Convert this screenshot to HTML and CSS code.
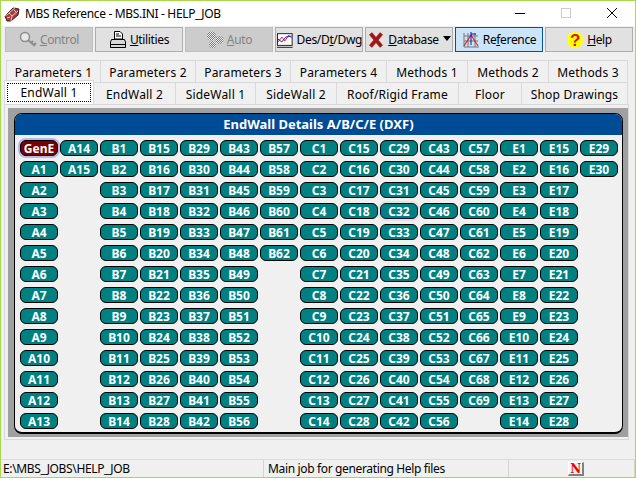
FILE: index.html
```html
<!DOCTYPE html>
<html lang="en">
<head>
  <meta charset="UTF-8" />
  <title>MBS Reference - MBS.INI - HELP_JOB</title>
  <link rel="stylesheet" href="styles.css">
</head>
<body>
<div class="window">

  <div class="titlebar">
    <svg class="app-icon" width="16" height="16" viewBox="0 0 16 16">
      <path d="M1 10 L9 2 L15 3 L14 9 L7 15 L3 15 Z" fill="#a83c3c" stroke="#3a1a1a"/>
      <path d="M1 10 L5 7 L8 10 L7 15 M5 7 L12 1 M8 10 L14 5 M3 12 L6 11 M10 4 L12 6" fill="none" stroke="#e8c8c8"/>
    </svg>
    <span class="title-text">MBS Reference - MBS.INI - HELP_JOB</span>
    <div class="winctl">
      <svg width="46" height="26" viewBox="0 0 46 26"><path d="M18 12.5 H28" stroke="#000"/></svg>
      <svg width="46" height="26" viewBox="0 0 46 26"><rect x="18.5" y="7.5" width="9" height="9" fill="none" stroke="#ccc"/></svg>
      <svg width="46" height="26" viewBox="0 0 46 26"><path d="M18 7 L28 17 M28 7 L18 17" stroke="#000" fill="none"/></svg>
    </div>
  </div>

  <div class="toolbar">
    <button class="tool disabled">
      <svg width="18" height="18" viewBox="0 0 18 18"><circle cx="6" cy="6" r="4.5" fill="#e8e8e8" stroke="#8c8c8c" stroke-width="1.5"/><path d="M9 9 L16 15 M12 12 L14 10 M15 14 L17 12" stroke="#8c8c8c" stroke-width="2" fill="none"/></svg>
      <span><u>C</u>ontrol</span>
    </button>
    <button class="tool">
      <svg width="18" height="18" viewBox="0 0 18 18"><path d="M5.5 0.5 H11 L13.5 3 V8 H5.5 Z" fill="#fff" stroke="#000"/><path d="M7 3 H10 M7 5 H12" stroke="#000"/><path d="M2.5 8.5 H15.5 L16.5 11 V16.5 H1.5 V11 Z" fill="#d8d8d8" stroke="#000"/><path d="M2 13.5 H16" stroke="#000"/></svg>
      <span><u>U</u>tilities</span>
    </button>
    <button class="tool disabled">
      <svg width="18" height="18" viewBox="0 0 18 18">
        <defs><pattern id="dither" width="2" height="2" patternUnits="userSpaceOnUse"><rect width="2" height="2" fill="#f0f0f0"/><rect width="1" height="1" fill="#777"/><rect x="1" y="1" width="1" height="1" fill="#777"/></pattern></defs>
        <circle cx="5.5" cy="5" r="4.5" fill="url(#dither)"/><circle cx="13.5" cy="9" r="4" fill="url(#dither)"/><circle cx="6.5" cy="13.5" r="3.5" fill="url(#dither)"/>
      </svg>
      <span><u>A</u>uto</span>
    </button>
    <button class="tool">
      <svg width="18" height="18" viewBox="0 0 18 18"><rect x="1.5" y="2.5" width="15" height="12" fill="#fff" stroke="#222"/><path d="M2 11 L6 6 L9 10 L13 4 L16 7" stroke="#e02020" fill="none"/><path d="M2 8 L6 11 L10 6 L16 5" stroke="#2020d0" fill="none"/><path d="M1 16.5 H17" stroke="#222"/></svg>
      <span>Des/D<u>t</u>/Dwg</span>
    </button>
    <button class="tool">
      <svg width="18" height="18" viewBox="0 0 18 18"><path d="M3.5 2.5 L14.5 15.5 M14.5 2.5 L3.5 15.5" stroke="#a01818" stroke-width="3.8" fill="none"/></svg>
      <span><u>D</u>atabase</span>
      <span class="caret"></span>
    </button>
    <button class="tool active">
      <svg width="18" height="18" viewBox="0 0 18 18"><path d="M2 2 V16 H17 M2 5 H16 M2 10 H16 M6 2 V16 M13 2 V16" stroke="#777" fill="none"/><path d="M2 15 L9 4 L16 15" stroke="#e02020" fill="none" stroke-width="1.2"/><path d="M9 1 V14 M9 3 H14" stroke="#1010c0"/></svg>
      <span>Re<u>f</u>erence</span>
    </button>
    <button class="tool">
      <svg width="18" height="18" viewBox="0 0 18 18">
        <defs><pattern id="yellow" width="2" height="2" patternUnits="userSpaceOnUse"><rect width="2" height="2" fill="#ffff00"/><rect width="1" height="1" fill="#fff8c0"/></pattern></defs>
        <circle cx="9" cy="9" r="8" fill="url(#yellow)"/><text x="9" y="14.5" text-anchor="middle" class="help-mark">?</text>
      </svg>
      <span><u>H</u>elp</span>
    </button>
  </div>

  <div class="tabs">
    <div class="tab-row">
      <span class="tab t95">Parameters 1</span>
      <span class="tab t95">Parameters 2</span>
      <span class="tab t95">Parameters 3</span>
      <span class="tab t96">Parameters 4</span>
      <span class="tab t81">Methods 1</span>
      <span class="tab t81">Methods 2</span>
      <span class="tab t79">Methods 3</span>
    </div>
    <div class="tab-row lower">
      <span class="tab current"><span class="focus">EndWall 1</span></span>
      <span class="tab t82">EndWall 2</span>
      <span class="tab t80">SideWall 1</span>
      <span class="tab t81">SideWall 2</span>
      <span class="tab t122">Roof/Rigid Frame</span>
      <span class="tab t63">Floor</span>
      <span class="tab t106">Shop Drawings</span>
    </div>
  </div>

  <div class="page">
    <div class="frame">
      <div class="panel">
        <div class="panel-title">EndWall Details A/B/C/E (DXF)</div>
        <div class="grid">
          <div class="col">
            <button class="pill gen">GenE</button><button class="pill">A1</button><button class="pill">A2</button><button class="pill">A3</button><button class="pill">A4</button><button class="pill">A5</button><button class="pill">A6</button><button class="pill">A7</button><button class="pill">A8</button><button class="pill">A9</button><button class="pill">A10</button><button class="pill">A11</button><button class="pill">A12</button><button class="pill">A13</button>
          </div>
          <div class="col">
            <button class="pill">A14</button><button class="pill">A15</button>
          </div>
          <div class="col">
            <button class="pill">B1</button><button class="pill">B2</button><button class="pill">B3</button><button class="pill">B4</button><button class="pill">B5</button><button class="pill">B6</button><button class="pill">B7</button><button class="pill">B8</button><button class="pill">B9</button><button class="pill">B10</button><button class="pill">B11</button><button class="pill">B12</button><button class="pill">B13</button><button class="pill">B14</button>
          </div>
          <div class="col">
            <button class="pill">B15</button><button class="pill">B16</button><button class="pill">B17</button><button class="pill">B18</button><button class="pill">B19</button><button class="pill">B20</button><button class="pill">B21</button><button class="pill">B22</button><button class="pill">B23</button><button class="pill">B24</button><button class="pill">B25</button><button class="pill">B26</button><button class="pill">B27</button><button class="pill">B28</button>
          </div>
          <div class="col">
            <button class="pill">B29</button><button class="pill">B30</button><button class="pill">B31</button><button class="pill">B32</button><button class="pill">B33</button><button class="pill">B34</button><button class="pill">B35</button><button class="pill">B36</button><button class="pill">B37</button><button class="pill">B38</button><button class="pill">B39</button><button class="pill">B40</button><button class="pill">B41</button><button class="pill">B42</button>
          </div>
          <div class="col">
            <button class="pill">B43</button><button class="pill">B44</button><button class="pill">B45</button><button class="pill">B46</button><button class="pill">B47</button><button class="pill">B48</button><button class="pill">B49</button><button class="pill">B50</button><button class="pill">B51</button><button class="pill">B52</button><button class="pill">B53</button><button class="pill">B54</button><button class="pill">B55</button><button class="pill">B56</button>
          </div>
          <div class="col">
            <button class="pill">B57</button><button class="pill">B58</button><button class="pill">B59</button><button class="pill">B60</button><button class="pill">B61</button><button class="pill">B62</button>
          </div>
          <div class="col">
            <button class="pill">C1</button><button class="pill">C2</button><button class="pill">C3</button><button class="pill">C4</button><button class="pill">C5</button><button class="pill">C6</button><button class="pill">C7</button><button class="pill">C8</button><button class="pill">C9</button><button class="pill">C10</button><button class="pill">C11</button><button class="pill">C12</button><button class="pill">C13</button><button class="pill">C14</button>
          </div>
          <div class="col">
            <button class="pill">C15</button><button class="pill">C16</button><button class="pill">C17</button><button class="pill">C18</button><button class="pill">C19</button><button class="pill">C20</button><button class="pill">C21</button><button class="pill">C22</button><button class="pill">C23</button><button class="pill">C24</button><button class="pill">C25</button><button class="pill">C26</button><button class="pill">C27</button><button class="pill">C28</button>
          </div>
          <div class="col">
            <button class="pill">C29</button><button class="pill">C30</button><button class="pill">C31</button><button class="pill hovered">C32</button><button class="pill">C33</button><button class="pill">C34</button><button class="pill">C35</button><button class="pill">C36</button><button class="pill">C37</button><button class="pill">C38</button><button class="pill">C39</button><button class="pill">C40</button><button class="pill">C41</button><button class="pill">C42</button>
          </div>
          <div class="col">
            <button class="pill">C43</button><button class="pill">C44</button><button class="pill">C45</button><button class="pill">C46</button><button class="pill">C47</button><button class="pill">C48</button><button class="pill">C49</button><button class="pill">C50</button><button class="pill">C51</button><button class="pill">C52</button><button class="pill">C53</button><button class="pill">C54</button><button class="pill">C55</button><button class="pill">C56</button>
          </div>
          <div class="col">
            <button class="pill">C57</button><button class="pill">C58</button><button class="pill">C59</button><button class="pill">C60</button><button class="pill">C61</button><button class="pill">C62</button><button class="pill">C63</button><button class="pill">C64</button><button class="pill">C65</button><button class="pill">C66</button><button class="pill">C67</button><button class="pill">C68</button><button class="pill">C69</button>
          </div>
          <div class="col">
            <button class="pill">E1</button><button class="pill">E2</button><button class="pill">E3</button><button class="pill">E4</button><button class="pill">E5</button><button class="pill">E6</button><button class="pill">E7</button><button class="pill">E8</button><button class="pill">E9</button><button class="pill">E10</button><button class="pill">E11</button><button class="pill">E12</button><button class="pill">E13</button><button class="pill">E14</button>
          </div>
          <div class="col">
            <button class="pill">E15</button><button class="pill">E16</button><button class="pill">E17</button><button class="pill">E18</button><button class="pill">E19</button><button class="pill">E20</button><button class="pill">E21</button><button class="pill">E22</button><button class="pill">E23</button><button class="pill">E24</button><button class="pill">E25</button><button class="pill">E26</button><button class="pill">E27</button><button class="pill">E28</button>
          </div>
          <div class="col">
            <button class="pill">E29</button><button class="pill">E30</button>
          </div>
        </div>
      </div>
    </div>
  </div>

  <div class="statusbar">
    <div class="cell path">E:\MBS_JOBS\HELP_JOB</div>
    <div class="cell desc">Main job for generating Help files</div>
    <div class="cell flag"><span class="n-badge">N</span></div>
  </div>

</div>
</body>
</html>
```

FILE: styles.css
```css
* {
  box-sizing: border-box;
}

html, body {
  margin: 0;
  height: 100%;
}

body {
  overflow: hidden;
  font-family: "Noto Sans", "Open Sans", sans-serif;
  font-size: 12px;
  color: #000;
  background-color: #f0f0f0;
}

.window {
  display: flex;
  flex-direction: column;
  width: 636px;
  height: 478px;
  border: 1px solid #a8d84e;
}

/* title bar */
.titlebar {
  display: flex;
  align-items: center;
  height: 25px;
  background-color: #fff;
  padding-left: 3px;
}

.app-icon {
  margin-right: 5px;
}

.title-text {
  flex: 1;
  font-size: 12px;
  letter-spacing: -0.33px;
}

.winctl {
  display: flex;
  align-self: flex-start;
}

/* toolbar */
.toolbar {
  display: flex;
  gap: 2px;
  padding: 1px 0 0 4px;
  background-color: #f0f0f0;
}

.tool {
  display: flex;
  align-items: center;
  justify-content: center;
  gap: 3px;
  width: 88px;
  height: 25px;
  padding: 0;
  font-family: inherit;
  font-size: 12px;
  letter-spacing: -0.35px;
  color: #000;
  background-color: #e1e1e1;
  border: 1px solid #adadad;
}

.tool.disabled {
  background-color: #cccccc;
  color: #838383;
  border-color: #bfbfbf;
}

.tool.active {
  background-color: #cce4f7;
  border-color: #005499;
}

.help-mark {
  font-family: "Liberation Sans", sans-serif;
  font-size: 17px;
  font-weight: bold;
  fill: #e01010;
}

.caret {
  width: 0;
  height: 0;
  margin: 0 0 2px 1px;
  border-left: 4px solid transparent;
  border-right: 4px solid transparent;
  border-top: 5px solid #000;
}

/* tabs */
.tabs {
  padding: 8px 0 0 3px;
}

.tab-row {
  display: flex;
  height: 22px;
  padding-left: 2px;
}

.tab-row.lower {
  padding-left: 0;
}

.tab {
  display: flex;
  align-items: center;
  justify-content: center;
  padding-top: 1px;
  font-size: 12px;
  letter-spacing: 0.2px;
  background-color: #f0f0f0;
  border: 1px solid #d9d9d9;
  border-left-width: 0;
  border-bottom-width: 0;
}

.tab-row .tab:first-child {
  border-left-width: 1px;
}

.t63 { width: 63px; }
.t79 { width: 79px; }
.t80 { width: 80px; }
.t81 { width: 81px; }
.t82 { width: 82px; }
.t95 { width: 95px; }
.t96 { width: 96px; }
.t106 { width: 106px; }
.t122 { width: 122px; }

.tab.current {
  width: 90px;
  height: 24px;
  margin-top: -2px;
  padding: 2px;
  background-color: #fff;
  position: relative;
}

.focus {
  display: flex;
  align-items: center;
  justify-content: center;
  width: 100%;
  height: 100%;
  border: 1px dotted #000;
}

/* tab page */
.page {
  height: 336px;
  margin: 0 6px 0 3px;
  padding: 3px 0 2px 3px;
  border: 1px solid #d9d9d9;
  background-color: #f0f0f0;
}

.frame {
  height: 100%;
  padding: 5px 5px 3px 6px;
  background-color: #a0a0a0;
}

.panel {
  height: 100%;
  background-color: #f0f0f0;
  border: 1px solid #000;
  border-bottom-width: 2px;
  border-radius: 8px;
  overflow: hidden;
}

.panel-title {
  height: 21px;
  line-height: 21px;
  text-align: center;
  font-size: 13px;
  font-weight: bold;
  color: #fff;
  background-color: #004b96;
}

.grid {
  display: flex;
  gap: 2px;
  padding: 5px 0 0 5px;
}

.col {
  display: flex;
  flex-direction: column;
  gap: 5px;
  width: 38px;
}

.pill {
  width: 38px;
  height: 16px;
  padding: 1px 0 0;
  font-family: "Noto Sans", sans-serif;
  font-size: 12px;
  font-weight: bold;
  line-height: 14px;
  color: #fff;
  background-color: #008080;
  border: 1px solid #000;
  border-radius: 6px;
}

.pill.gen {
  background-color: #7a0000;
  box-shadow: 0 0 0 2px #b8b8ec;
}

.pill.hovered {
  box-shadow: 0 0 0 2px #e6e2dc;
  border-color: #101040;
}

/* status bar */
.statusbar {
  display: flex;
  height: 18px;
  margin-top: auto;
  border-top: 1px solid #dcdcdc;
}

.cell {
  display: flex;
  align-items: center;
  font-size: 12px;
  letter-spacing: -0.35px;
  padding-left: 2px;
  border-right: 1px solid #d4d4d4;
}

.path { width: 263px; }

.desc {
  width: 245px;
  padding-left: 4px;
}

.flag {
  flex: 1;
  padding-left: 59px;
}

.n-badge {
  width: 16px;
  height: 14px;
  line-height: 12px;
  text-align: center;
  font-family: "DejaVu Serif", serif;
  font-size: 12px;
  font-weight: bold;
  color: #f00000;
  background-color: #f4f4f4;
  border-top: 1px solid #fff;
  border-left: 1px solid #fff;
  border-right: 2px solid #808080;
  border-bottom: 2px solid #808080;
}
```
